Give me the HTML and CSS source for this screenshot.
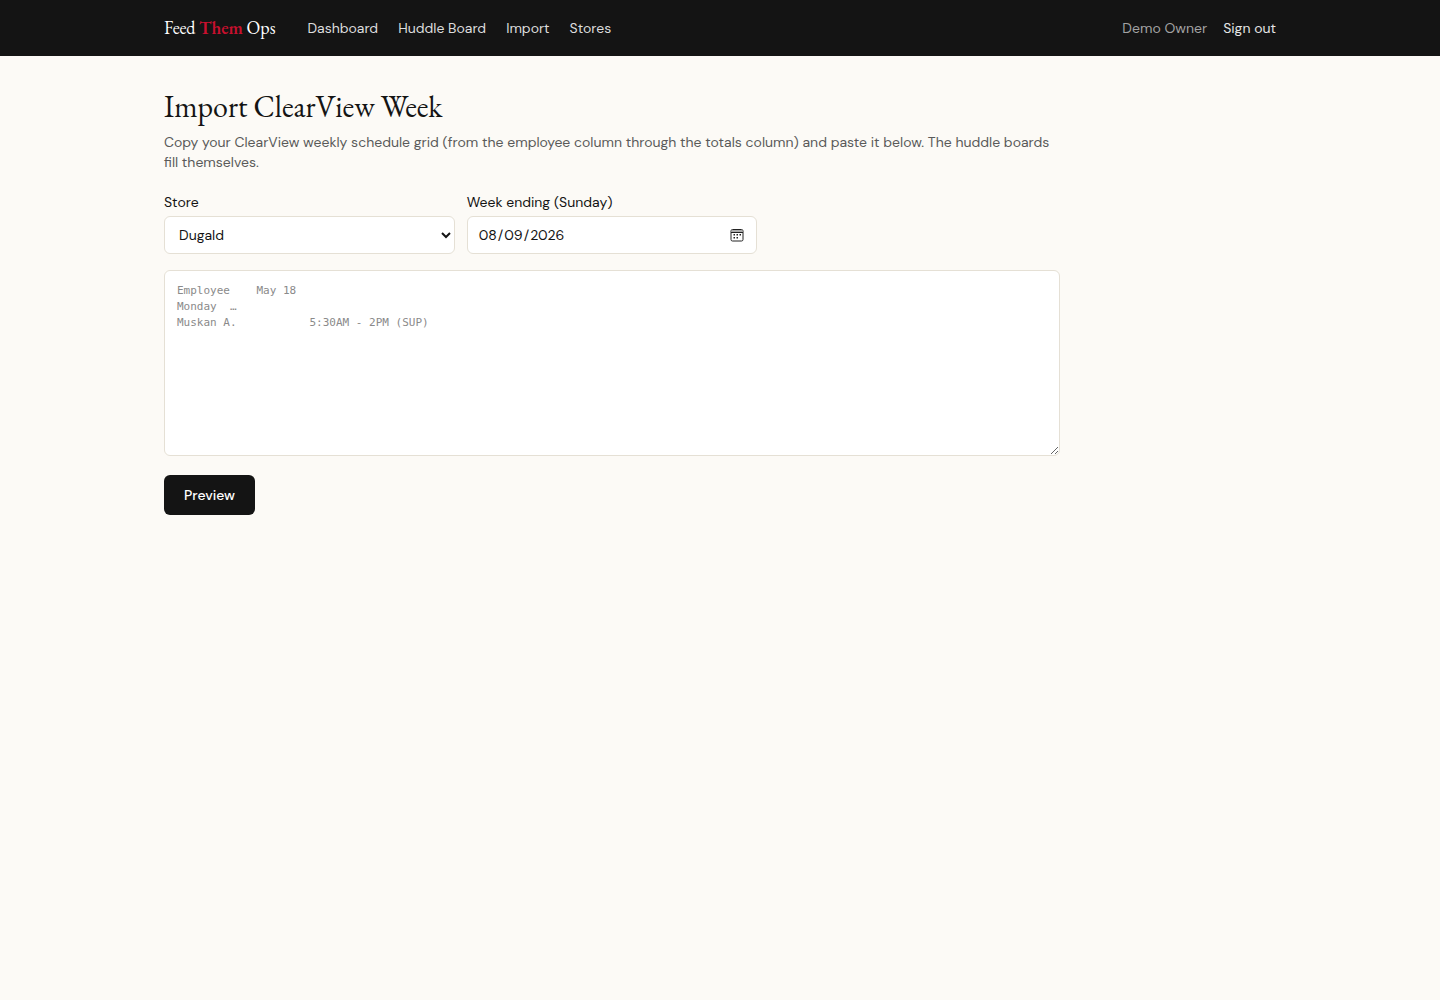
FILE: index.html
```html
<!DOCTYPE html>
<html lang="en">
<head>
  <meta charset="UTF-8" />
  <meta name="viewport" content="width=device-width, initial-scale=1.0"/>
  <title>Import ClearView Week</title>
  <link rel="stylesheet" href="styles.css">
</head>
<body>
  <header class="topbar">
    <div class="topbar-inner">
      <a class="brand" href="#">Feed <span class="brand-accent">Them</span> Ops</a>
      <nav class="nav">
        <a href="#">Dashboard</a>
        <a href="#">Huddle Board</a>
        <a href="#">Import</a>
        <a href="#">Stores</a>
      </nav>
      <div class="account">
        <span class="user">Demo Owner</span>
        <button class="signout" type="button">Sign out</button>
      </div>
    </div>
  </header>

  <main class="page">
    <div class="content">
      <h1>Import ClearView Week</h1>
      <p class="intro">Copy your ClearView weekly schedule grid (from the employee column through the totals column) and paste it below. The huddle boards fill themselves.</p>

      <form class="import-form">
        <div class="fields">
          <div class="field">
            <label for="store">Store</label>
            <select id="store">
              <option>Dugald</option>
            </select>
          </div>
          <div class="field">
            <label for="weekEnding">Week ending (Sunday)</label>
            <input type="date" id="weekEnding" value="2026-08-09" />
          </div>
        </div>
        <textarea id="grid" aria-label="Schedule grid" placeholder="Employee&#9;May 18&#10;Monday&#9;…&#10;Muskan A.&#9;&#9;&#9;5:30AM - 2PM (SUP)"></textarea>
        <button class="preview" type="button">Preview</button>
      </form>
    </div>
  </main>
</body>
</html>
```

FILE: styles.css
```css
* {
  box-sizing: border-box;
}
body {
  margin: 0;
  font-family: "DM Sans", "Open Sans", sans-serif;
  font-size: 14px;
  line-height: 20px;
  color: #141414;
  background: #fcfaf6;
}
a {
  color: inherit;
  text-decoration: none;
}
.topbar {
  background: #141414;
  color: #e5e5e5;
}
.topbar-inner {
  display: flex;
  align-items: center;
  max-width: 1152px;
  height: 56px;
  margin: 0 auto;
  padding: 0 20px;
}
.brand {
  font-family: "EB Garamond", "Liberation Serif", serif;
  font-size: 18px;
  line-height: 28px;
  font-weight: 400;
  color: #fff;
  margin-right: 32px;
}
.brand-accent {
  color: #c8102e;
  font-weight: 600;
}
.nav {
  display: flex;
  gap: 20px;
  color: #dcdcdc;
}
.account {
  display: flex;
  align-items: center;
  gap: 16px;
  margin-left: auto;
}
.user {
  color: #a3a3a3;
}
.signout {
  padding: 0;
  border: 0;
  background: none;
  font: inherit;
  color: inherit;
}
.page {
  max-width: 1152px;
  margin: 0 auto;
  padding: 32px 20px;
}
.content {
  max-width: 896px;
}
h1 {
  margin: 0 0 6px;
  font-family: "EB Garamond", "Liberation Serif", serif;
  font-size: 30px;
  line-height: 38px;
  font-weight: 400;
}
.intro {
  margin: 0 0 20px;
  color: #5a5a5a;
}
.import-form {
  display: flex;
  flex-direction: column;
  align-items: flex-start;
}
.fields {
  display: grid;
  grid-template-columns: repeat(3, 1fr);
  gap: 12px;
  width: 100%;
  margin-bottom: 16px;
}
label {
  display: block;
  margin-bottom: 4px;
}
select,
input,
textarea {
  display: block;
  width: 100%;
  border: 1px solid #e5e0d5;
  border-radius: 6px;
  background: #fff;
  color: inherit;
  font: inherit;
}
select,
input {
  height: 38px;
  padding: 0 10px;
}
input::-webkit-calendar-picker-indicator {
  width: 14px;
  height: 14px;
  padding: 2px;
  background: url("data:image/svg+xml,%3Csvg xmlns='http://www.w3.org/2000/svg' viewBox='0 0 28 28'%3E%3Crect x='2' y='3' width='24' height='23' rx='3' fill='none' stroke='%23222' stroke-width='2'/%3E%3Cpath d='M3 4h22v5H3z' fill='%23aaa'/%3E%3Cpath d='M2 9h24' stroke='%23222' stroke-width='2'/%3E%3Cpath d='M7 12h3v3H7zM13 12h3v3h-3zM19 12h3v3h-3zM7 18h3v3H7zM13 18h3v3h-3z' fill='%23222'/%3E%3C/svg%3E") center / 14px 14px no-repeat;
}
textarea {
  height: 186px;
  margin-bottom: 19px;
  padding: 12px;
  font-family: "DejaVu Sans Mono", "Liberation Mono", monospace;
  font-size: 11px;
  line-height: 16px;
  tab-size: 4;
}
textarea::placeholder {
  color: #8a8a8a;
}
.preview {
  height: 40px;
  padding: 0 20px;
  border: 0;
  border-radius: 6px;
  background: #141414;
  color: #fff;
  font: inherit;
  font-weight: 500;
}
```
